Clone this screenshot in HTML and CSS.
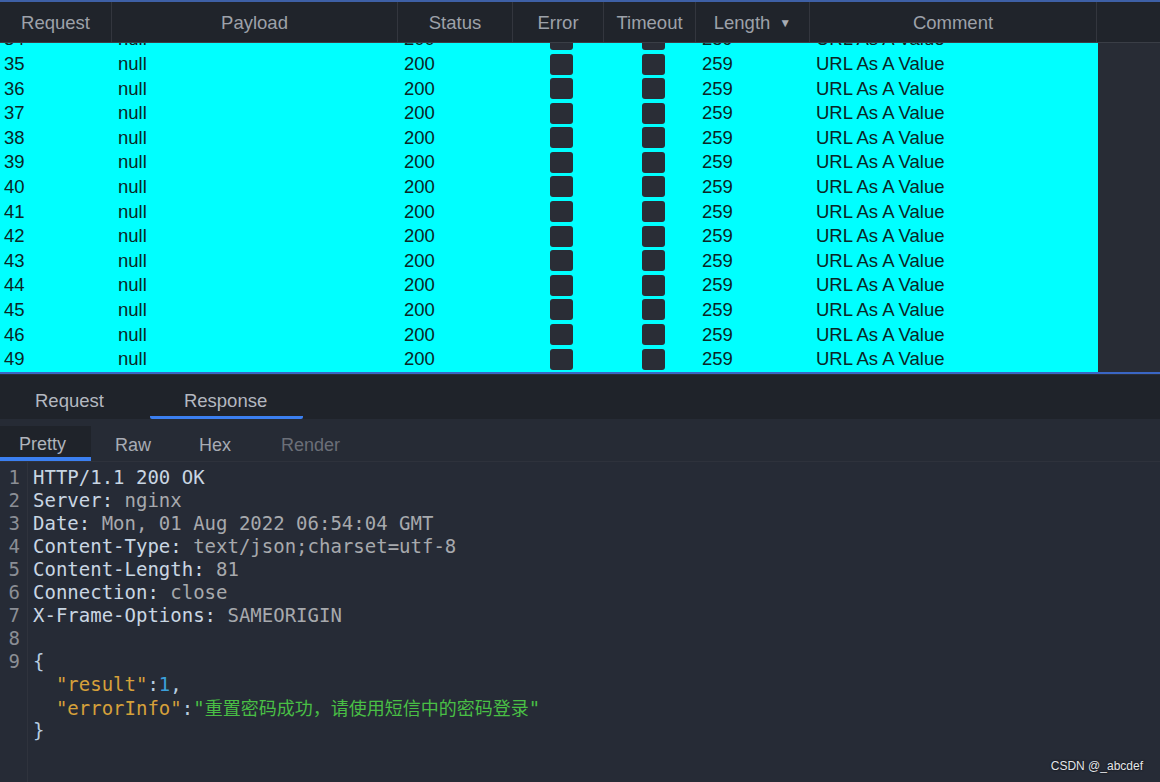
FILE: index.html
```html
<!DOCTYPE html>
<html lang="en">
<head>
<meta charset="utf-8">
<title>Intruder results</title>
<link rel="stylesheet" href="styles.css">
</head>
<body>
<div class="app">
  <section class="results">
    <div class="thead">
      <div class="th">Request</div>
      <div class="th">Payload</div>
      <div class="th">Status</div>
      <div class="th">Error</div>
      <div class="th">Timeout</div>
      <div class="th">Length<span class="caret">&#9660;</span></div>
      <div class="th">Comment</div>
      <div class="th th-fill"></div>
    </div>
    <div class="tbody">
      <div class="rows">
        <div class="row"><span class="td">34</span><span class="td">null</span><span class="td">200</span><span class="td td-box"><i class="chk"></i></span><span class="td td-box"><i class="chk"></i></span><span class="td">259</span><span class="td">URL As A Value</span></div>
        <div class="row"><span class="td">35</span><span class="td">null</span><span class="td">200</span><span class="td td-box"><i class="chk"></i></span><span class="td td-box"><i class="chk"></i></span><span class="td">259</span><span class="td">URL As A Value</span></div>
        <div class="row"><span class="td">36</span><span class="td">null</span><span class="td">200</span><span class="td td-box"><i class="chk"></i></span><span class="td td-box"><i class="chk"></i></span><span class="td">259</span><span class="td">URL As A Value</span></div>
        <div class="row"><span class="td">37</span><span class="td">null</span><span class="td">200</span><span class="td td-box"><i class="chk"></i></span><span class="td td-box"><i class="chk"></i></span><span class="td">259</span><span class="td">URL As A Value</span></div>
        <div class="row"><span class="td">38</span><span class="td">null</span><span class="td">200</span><span class="td td-box"><i class="chk"></i></span><span class="td td-box"><i class="chk"></i></span><span class="td">259</span><span class="td">URL As A Value</span></div>
        <div class="row"><span class="td">39</span><span class="td">null</span><span class="td">200</span><span class="td td-box"><i class="chk"></i></span><span class="td td-box"><i class="chk"></i></span><span class="td">259</span><span class="td">URL As A Value</span></div>
        <div class="row"><span class="td">40</span><span class="td">null</span><span class="td">200</span><span class="td td-box"><i class="chk"></i></span><span class="td td-box"><i class="chk"></i></span><span class="td">259</span><span class="td">URL As A Value</span></div>
        <div class="row"><span class="td">41</span><span class="td">null</span><span class="td">200</span><span class="td td-box"><i class="chk"></i></span><span class="td td-box"><i class="chk"></i></span><span class="td">259</span><span class="td">URL As A Value</span></div>
        <div class="row"><span class="td">42</span><span class="td">null</span><span class="td">200</span><span class="td td-box"><i class="chk"></i></span><span class="td td-box"><i class="chk"></i></span><span class="td">259</span><span class="td">URL As A Value</span></div>
        <div class="row"><span class="td">43</span><span class="td">null</span><span class="td">200</span><span class="td td-box"><i class="chk"></i></span><span class="td td-box"><i class="chk"></i></span><span class="td">259</span><span class="td">URL As A Value</span></div>
        <div class="row"><span class="td">44</span><span class="td">null</span><span class="td">200</span><span class="td td-box"><i class="chk"></i></span><span class="td td-box"><i class="chk"></i></span><span class="td">259</span><span class="td">URL As A Value</span></div>
        <div class="row"><span class="td">45</span><span class="td">null</span><span class="td">200</span><span class="td td-box"><i class="chk"></i></span><span class="td td-box"><i class="chk"></i></span><span class="td">259</span><span class="td">URL As A Value</span></div>
        <div class="row"><span class="td">46</span><span class="td">null</span><span class="td">200</span><span class="td td-box"><i class="chk"></i></span><span class="td td-box"><i class="chk"></i></span><span class="td">259</span><span class="td">URL As A Value</span></div>
        <div class="row"><span class="td">49</span><span class="td">null</span><span class="td">200</span><span class="td td-box"><i class="chk"></i></span><span class="td td-box"><i class="chk"></i></span><span class="td">259</span><span class="td">URL As A Value</span></div>
      </div>
      <div class="tfill"></div>
    </div>
  </section>

  <section class="detail">
    <nav class="tabs">
      <div class="tab tab-first">Request</div>
      <div class="tab tab-active">Response</div>
    </nav>
    <nav class="subtabs">
      <div class="subtab subtab-active">Pretty</div>
      <div class="subtab">Raw</div>
      <div class="subtab">Hex</div>
      <div class="subtab subtab-dim">Render</div>
    </nav>
    <div class="editor">
      <div class="gutter">
        <div>1</div><div>2</div><div>3</div><div>4</div><div>5</div><div>6</div><div>7</div><div>8</div><div>9</div>
      </div>
      <div class="code">
        <div class="ln"><span class="hk">HTTP/1.1 200 OK</span></div>
        <div class="ln"><span class="hk">Server:</span> <span class="hv">nginx</span></div>
        <div class="ln"><span class="hk">Date:</span> <span class="hv">Mon, 01 Aug 2022 06:54:04 GMT</span></div>
        <div class="ln"><span class="hk">Content-Type:</span> <span class="hv">text/json;charset=utf-8</span></div>
        <div class="ln"><span class="hk">Content-Length:</span> <span class="hv">81</span></div>
        <div class="ln"><span class="hk">Connection:</span> <span class="hv">close</span></div>
        <div class="ln"><span class="hk">X-Frame-Options:</span> <span class="hv">SAMEORIGIN</span></div>
        <div class="ln"> </div>
        <div class="ln"><span class="pn">{</span></div>
        <div class="ln">  <span class="jk">"result"</span><span class="pn">:</span><span class="jn">1</span><span class="pn">,</span></div>
        <div class="ln">  <span class="jk">"errorInfo"</span><span class="pn">:</span><span class="js">"<span class="cjk">重置密码成功，请使用短信中的密码登录</span>"</span></div>
        <div class="ln"><span class="pn">}</span></div>
      </div>
    </div>
  </section>
  <div class="watermark">CSDN @_abcdef</div>
</div>
</body>
</html>
```

FILE: styles.css
```css
* { box-sizing: border-box; }
html, body { margin: 0; padding: 0; }
body {
  background: #262b35;
  font-family: "Liberation Sans", Arial, sans-serif;
  width: 1160px;
  height: 782px;
  overflow: hidden;
}
.app {
  position: relative;
  height: 782px;
  display: flex;
  flex-direction: column;
  border-top: 2px solid #3e60a6;
}

/* results table */
.results {
  height: 370px;
  display: flex;
  flex-direction: column;
}
.thead {
  display: grid;
  grid-template-columns: 112px 286px 115px 91px 92px 114px 287px 1fr;
  height: 41px;
  background: #20242b;
  border-bottom: 1px solid #3a3e46;
}
.th {
  display: flex;
  align-items: center;
  justify-content: center;
  color: #9da1a9;
  font-size: 18.5px;
  padding-top: 1px;
  border-right: 1px solid #33363e;
}
.th-fill { border-right: none; }
.caret { font-size: 12px; margin-left: 9px; color: #a8acb4; }
.tbody {
  flex: 1;
  display: flex;
  overflow: hidden;
}
.rows {
  width: 1098px;
  background: #00ffff;
  box-shadow: 1px 0 0 #0d6b6b;
}
.tfill { flex: 1; background: #282c35; }
.row {
  display: grid;
  grid-template-columns: 112px 286px 115px 91px 92px 114px 287px;
  height: 24.6px;
  align-items: center;
  color: #0a2626;
  font-size: 18.5px;
  padding-top: 1px;
}
.rows .row:first-child { margin-top: -16.4px; }
.td { padding-left: 6px; white-space: nowrap; }
.td:first-child { padding-left: 4px; }
.td-box { display: flex; justify-content: center; padding-left: 6px; }
.chk {
  display: block;
  width: 23px;
  height: 21px;
  background: #2a2d36;
  border-radius: 3px;
}

/* detail pane */
.detail {
  flex: 1;
  display: flex;
  flex-direction: column;
  border-top: 2px solid #3a66c4;
}
.tabs {
  display: flex;
  height: 45px;
  background: #1f232a;
  border-top: 1px solid #2b2f37;
  gap: 10px;
}
.tab {
  display: flex;
  align-items: center;
  padding: 10px 36px 0 34px;
  font-size: 18.5px;
  color: #b4b8c0;
  border-bottom: 3px solid transparent;
}
.tab-first { padding-left: 35px; }
.tab-active {
  border-bottom-color: #3b7ff0;
  border-radius: 0 0 2px 2px;
}
.subtabs {
  display: flex;
  height: 43px;
  background: #262b35;
  align-items: flex-end;
  border-bottom: 1px solid #2e323c;
}
.subtab {
  height: 35px;
  display: flex;
  align-items: center;
  padding: 3px 24px 0 24px;
  font-size: 18px;
  color: #a8acb4;
}
.subtab-active {
  background: #1f232a;
  padding: 6px 25px 0 19px;
  color: #b0b4bc;
  border-bottom: 4px solid #3b7ff0;
}
.subtab-dim { color: #6b6f78; padding-left: 26px; }

.editor {
  flex: 1;
  display: flex;
  background: #262b36;
  font-family: "DejaVu Sans Mono", monospace;
  font-size: 19px;
  line-height: 23px;
}
.gutter {
  width: 28px;
  border-right: 1px solid #2f333d;
  color: #8b8e95;
  text-align: right;
  padding: 4px 7px 0 0;
}
.code {
  padding: 4px 0 0 5px;
}
.ln { white-space: pre; height: 23px; }
.hk { color: #c9d6e3; }
.hv { color: #a7a9ad; }
.pn { color: #b7cde0; }
.jk { color: #d6a13a; }
.jn { color: #3ba0dc; }
.js { color: #49bf45; }
.cjk {
  font-family: "Noto Sans CJK SC", sans-serif;
  font-size: 18px;
}

.watermark {
  position: absolute;
  right: 17px;
  bottom: 9px;
  font-size: 12px;
  color: #e4e6ea;
  text-shadow: 0 0 2px #000;
}
```
